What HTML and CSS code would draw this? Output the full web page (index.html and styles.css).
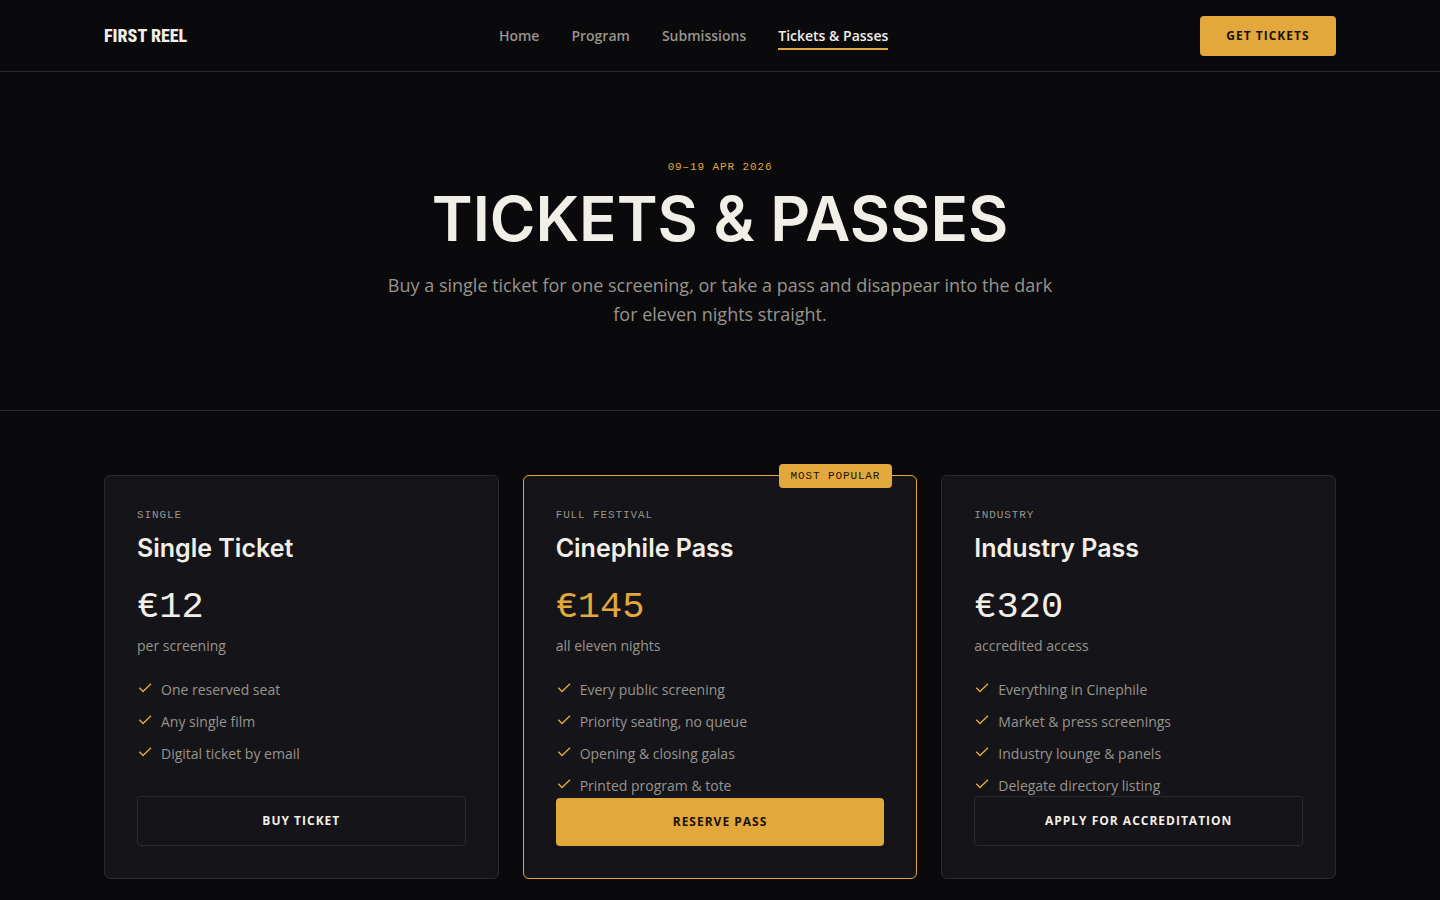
FILE: index.html
```html
<!DOCTYPE html>
<html lang="en">
<head>
  <meta charset="UTF-8">
  <meta name="viewport" content="width=device-width, initial-scale=1.0">
  <title>Tickets &amp; Passes | First Reel</title>
  <link rel="stylesheet" href="styles.css">
</head>
<body>
  <!-- Shared check icon -->
  <svg class="sprite" aria-hidden="true">
    <symbol id="check" viewBox="0 0 16 16">
      <path d="M2.3 7.8 L6 11.5 L14 3.8" fill="none" stroke="currentColor" stroke-width="1.4"/>
    </symbol>
  </svg>

  <header class="site-header">
    <div class="container header-inner">
      <a class="logo" href="#">FIRST REEL</a>
      <nav class="nav" aria-label="Main">
        <a href="#">Home</a>
        <a href="#">Program</a>
        <a href="#">Submissions</a>
        <a class="active" href="#" aria-current="page">Tickets &amp; Passes</a>
      </nav>
      <button class="btn btn-gold btn-small" type="button">GET TICKETS</button>
    </div>
  </header>

  <main>
    <!-- Hero -->
    <section class="hero">
      <p class="eyebrow">09–19 APR 2026</p>
      <h1>TICKETS &amp; PASSES</h1>
      <p class="lead">Buy a single ticket for one screening, or take a pass and disappear into the dark for eleven nights straight.</p>
    </section>

    <!-- Pricing -->
    <section class="container pricing">
      <article class="card">
        <p class="tier">SINGLE</p>
        <h2>Single Ticket</h2>
        <p class="price">€12</p>
        <p class="unit">per screening</p>
        <ul class="features">
          <li><svg class="check"><use href="#check"/></svg>One reserved seat</li>
          <li><svg class="check"><use href="#check"/></svg>Any single film</li>
          <li><svg class="check"><use href="#check"/></svg>Digital ticket by email</li>
        </ul>
        <button class="btn btn-outline" type="button">BUY TICKET</button>
      </article>

      <article class="card featured">
        <span class="badge">MOST POPULAR</span>
        <p class="tier">FULL FESTIVAL</p>
        <h2>Cinephile Pass</h2>
        <p class="price">€145</p>
        <p class="unit">all eleven nights</p>
        <ul class="features">
          <li><svg class="check"><use href="#check"/></svg>Every public screening</li>
          <li><svg class="check"><use href="#check"/></svg>Priority seating, no queue</li>
          <li><svg class="check"><use href="#check"/></svg>Opening &amp; closing galas</li>
          <li><svg class="check"><use href="#check"/></svg>Printed program &amp; tote</li>
        </ul>
        <button class="btn btn-gold" type="button">RESERVE PASS</button>
      </article>

      <article class="card">
        <p class="tier">INDUSTRY</p>
        <h2>Industry Pass</h2>
        <p class="price">€320</p>
        <p class="unit">accredited access</p>
        <ul class="features">
          <li><svg class="check"><use href="#check"/></svg>Everything in Cinephile</li>
          <li><svg class="check"><use href="#check"/></svg>Market &amp; press screenings</li>
          <li><svg class="check"><use href="#check"/></svg>Industry lounge &amp; panels</li>
          <li><svg class="check"><use href="#check"/></svg>Delegate directory listing</li>
        </ul>
        <button class="btn btn-outline" type="button">APPLY FOR ACCREDITATION</button>
      </article>
    </section>
  </main>
</body>
</html>
```
FILE: styles.css
```css
:root {
  --bg: #0a0a0c;
  --panel: #151419;
  --line: #2a2a2f;
  --text: #f2efe8;
  --muted: #98948d;
  --gold: #e2a83c;
  --ink: #1a1206;
  --body: "Open Sans", sans-serif;
  --display: Inter, sans-serif;
  --mono: "Liberation Mono", monospace;
}

* {
  box-sizing: border-box;
}

body {
  margin: 0;
  background: var(--bg);
  color: var(--text);
  font-family: var(--body);
  font-size: 14px;
  font-weight: 400;
  line-height: 20px;
}

h1, h2, p, ul {
  margin: 0;
  padding: 0;
}

.sprite {
  display: none;
}

.container {
  width: 100%;
  max-width: 1280px;
  margin: 0 auto;
  padding: 0 24px;
}

/* Header */
.site-header {
  border-bottom: 1px solid var(--line);
}

.header-inner {
  display: flex;
  align-items: center;
  justify-content: space-between;
  padding-top: 16px;
  padding-bottom: 15px;
}

.logo {
  color: var(--text);
  font-family: "Liberation Sans Narrow", "Roboto Condensed", "Liberation Sans", sans-serif;
  font-size: 18px;
  font-weight: 800;
  text-decoration: none;
}

.nav {
  display: flex;
  gap: 32px;
}

.nav a {
  padding: 4px 0 2px;
  border-bottom: 2px solid transparent;
  color: var(--muted);
  font-size: 14px;
  font-weight: 600;
  text-decoration: none;
}

.nav a.active {
  border-color: var(--gold);
  color: var(--text);
}

/* Buttons */
.btn {
  padding: 14px 24px;
  border: 0;
  border-radius: 4px;
  font-family: var(--body);
  font-size: 12px;
  font-weight: 700;
  line-height: 20px;
  letter-spacing: 1px;
  cursor: pointer;
}

.btn-small {
  min-width: 136px;
  padding: 10px 24px;
}

.btn-gold {
  background: var(--gold);
  color: var(--ink);
}

.btn-outline {
  border: 1px solid var(--line);
  background: transparent;
  color: var(--text);
}

/* Hero */
.hero {
  display: flex;
  flex-direction: column;
  align-items: center;
  padding: 88px 24px 81px;
  border-bottom: 1px solid var(--line);
  text-align: center;
}

.eyebrow,
.tier,
.badge {
  font-family: var(--mono);
  font-size: 11px;
  font-weight: 400;
  line-height: 14px;
  letter-spacing: 0.08em;
}

.eyebrow {
  color: var(--gold);
}

h1 {
  margin: 13px 0 20px;
  font-family: var(--display);
  font-size: 62px;
  font-weight: 600;
  line-height: 64px;
}

.lead {
  max-width: 680px;
  color: var(--muted);
  font-size: 18px;
  line-height: 29px;
}

/* Pricing cards */
.pricing {
  display: grid;
  grid-template-columns: repeat(3, 1fr);
  gap: 24px;
  padding-top: 64px;
  padding-bottom: 64px;
}

.card {
  position: relative;
  display: flex;
  flex-direction: column;
  padding: 32px;
  border: 1px solid var(--line);
  border-radius: 6px;
  background: var(--panel);
}

.card.featured {
  border-color: var(--gold);
}

.badge {
  position: absolute;
  top: -12px;
  right: 24px;
  padding: 5px 12px;
  border-radius: 4px;
  background: var(--gold);
  color: var(--ink);
}

.tier,
.unit {
  color: var(--muted);
}

h2 {
  margin: 10px 0 24px;
  font-family: var(--display);
  font-size: 25px;
  font-weight: 600;
  line-height: 32px;
}

.price {
  margin-bottom: 10px;
  font-family: var(--mono);
  font-size: 37px;
  font-weight: 400;
  line-height: 38px;
}

.featured .price {
  color: var(--gold);
}

.features {
  display: flex;
  flex-direction: column;
  gap: 12px;
  margin-top: 24px;
  color: var(--muted);
  list-style: none;
}

.features li {
  display: flex;
  align-items: flex-start;
  gap: 8px;
}

.check {
  width: 16px;
  height: 16px;
  color: var(--gold);
}

.card .btn {
  margin-top: auto;
}
```
